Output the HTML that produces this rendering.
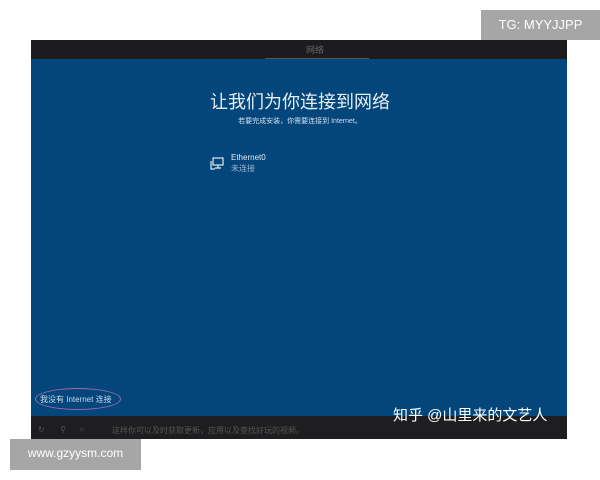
<!DOCTYPE html>
<html><head><meta charset="utf-8"><style>
body{margin:0;width:600px;height:480px;background:#fff;position:relative;overflow:hidden;font-family:"Liberation Sans","Noto Sans CJK SC",sans-serif}
.a{position:absolute}
</style></head><body>
<div class="a" style="left:31px;top:40px;width:536px;height:399px;background:#03467c"></div>
<div class="a" style="left:31px;top:40px;width:536px;height:19px;background:#1c1c1e"></div>
<div class="a" style="left:265px;top:58px;width:104px;height:1px;background:#555"></div>
<div class="a" style="left:300px;top:43px;width:30px;font-size:9px;color:#666;text-align:center">网络</div>
<div class="a" style="left:31px;top:416px;width:536px;height:23px;background:#1e1e20"></div>
<div class="a" style="left:0;top:88px;width:600px;text-align:center;font-size:18px;color:#e8eef5">让我们为你连接到网络</div>
<div class="a" style="left:0;top:116px;width:600px;text-align:center;font-size:7px;color:#d6dfe9">若要完成安装，你需要连接到 Internet。</div>
<svg class="a" style="left:210px;top:157px" width="14" height="13" viewBox="0 0 14 13"><rect x="3" y="1" width="10" height="7" fill="none" stroke="#e0e8f0" stroke-width="1.2"/><path d="M1 4v8h4M8 8v3M5 11h6" stroke="#e0e8f0" stroke-width="1.2" fill="none"/></svg>
<div class="a" style="left:231px;top:153px;font-size:8px;color:#e0e8f0">Ethernet0</div>
<div class="a" style="left:231px;top:163px;font-size:8px;color:#9fb6cc">未连接</div>
<div class="a" style="left:35px;top:388px;width:84px;height:20px;border:1.5px solid #a06aa8;border-radius:50%"></div>
<div class="a" style="left:40px;top:394px;font-size:8px;color:#c8d8e8">我没有 Internet 连接</div>
<div class="a" style="left:393px;top:404px;font-size:15px;color:#fff">知乎 @山里来的文艺人</div>
<div class="a" style="left:112px;top:425px;font-size:8px;color:#555">这样你可以及时获取更新，应用以及查找好玩的视频。</div>
<div class="a" style="left:38px;top:425px;font-size:8px;color:#555">↻&nbsp;&nbsp;&nbsp;&nbsp;&nbsp;&nbsp;&nbsp;⚲&nbsp;&nbsp;&nbsp;&nbsp;&nbsp;&nbsp;○</div>
<div class="a" style="left:481px;top:10px;width:119px;height:30px;background:#a6a6a6;color:#fff;font-size:13px;line-height:30px;text-align:center">TG: MYYJJPP</div>
<div class="a" style="left:10px;top:439px;width:131px;height:31px;background:#a6a6a6;color:#fff;font-size:12px;line-height:29px;text-align:center">www.gzyysm.com</div>
</body></html>
